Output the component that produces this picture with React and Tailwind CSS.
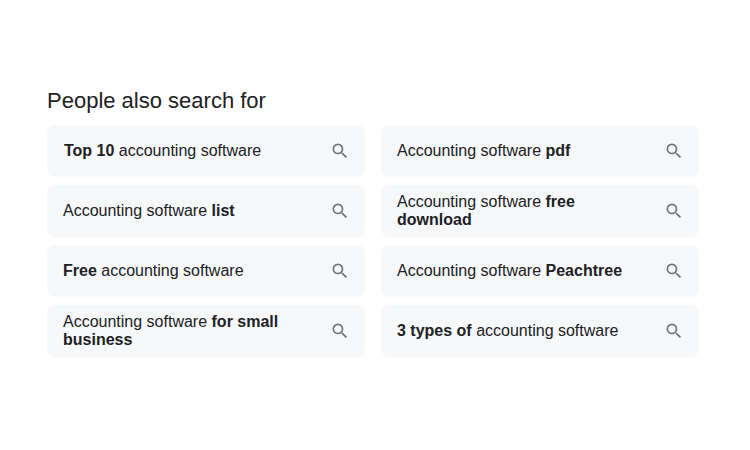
import React from "react";

const items = [
  [<><b className="font-bold">Top 10</b> accounting software</>, "pl-[17px]"],
  [<>Accounting software <b className="font-bold">pdf</b></>, "pl-4"],
  [<>Accounting software <b className="font-bold">list</b></>, "pl-4"],
  [<>Accounting software <b className="font-bold">free download</b></>, "pl-4"],
  [<><b className="font-bold">Free</b> accounting software</>, "pl-4"],
  [<>Accounting software <b className="font-bold">Peachtree</b></>, "pl-4"],
  [<>Accounting software <b className="font-bold">for small business</b></>, "pl-4"],
  [<><b className="font-bold">3 types of</b> accounting software</>, "pl-4"],
];

function SearchIcon() {
  return (
    <svg viewBox="0 0 24 24" className="w-5 h-5 shrink-0 fill-[#70757a]">
      <path d="M15.5 14h-.79l-.28-.27A6.471 6.471 0 0 0 16 9.5 6.5 6.5 0 1 0 9.5 16c1.61 0 3.09-.59 4.23-1.57l.27.28v.79l5 4.99L20.49 19l-4.99-5zm-6 0C7.01 14 5 11.99 5 9.5S7.01 5 9.5 5 14 7.01 14 9.5 11.99 14 9.5 14z" />
    </svg>
  );
}

export default function App() {
  return (
    <div className="w-[750px] h-[450px] bg-white px-[47px] pt-[88px] font-['Liberation_Sans',Arial,sans-serif] text-[#202124]">
      <h2 className="text-[22px] leading-[26px] font-normal mb-[11px]">People also search for</h2>
      <div className="grid grid-cols-[318px_318px] gap-x-4 gap-y-2">
        {items.map(([label, pad], i) => (
          <div key={i} className={`h-[52px] rounded-lg bg-[#f7f8f9] flex items-center justify-between pr-[15px] ${pad}`}>
            <span className="text-[16px] leading-[18px] w-[232px]">{label}</span>
            <SearchIcon />
          </div>
        ))}
      </div>
    </div>
  );
}
